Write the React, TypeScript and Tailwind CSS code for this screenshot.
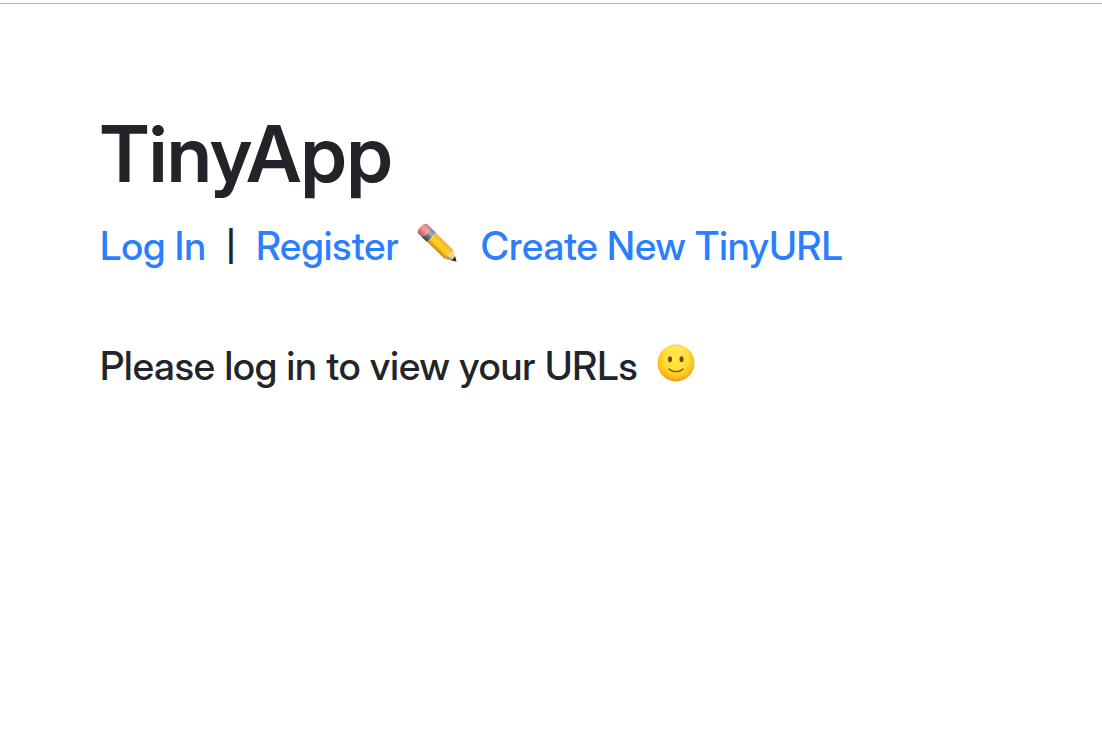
function Pencil() {
  return (
    <svg className="h-10 w-10 shrink-0 overflow-visible" viewBox="0 0 40 40" aria-hidden="true">
      <defs>
        <linearGradient id="barrel" x1="0" y1="0" x2="0" y2="1">
          <stop offset="0" stopColor="#e9c264" />
          <stop offset=".14" stopColor="#f3b829" />
          <stop offset=".3" stopColor="#fbc926" />
          <stop offset=".6" stopColor="#fbd02c" />
          <stop offset=".75" stopColor="#f0b30f" />
          <stop offset="1" stopColor="#bf8810" />
        </linearGradient>
        <linearGradient id="ferrule" x1="0" y1="0" x2="0" y2="1">
          <stop offset="0" stopColor="#6e90b0" />
          <stop offset=".35" stopColor="#a3adb8" />
          <stop offset=".6" stopColor="#76797d" />
          <stop offset="1" stopColor="#3c3e42" />
        </linearGradient>
        <linearGradient id="eraser" x1="0" y1="0" x2="0" y2="1">
          <stop offset="0" stopColor="#dc7679" />
          <stop offset=".4" stopColor="#f3a3a5" />
          <stop offset="1" stopColor="#b85558" />
        </linearGradient>
      </defs>
      <g transform="translate(39.500 38.500) rotate(44)">
        <path d="M-41-6.500h-5.500c-2.300 0-3.500 3-3.500 6.500s1.200 6.500 3.500 6.500h5.500Z" fill="url(#eraser)" />
        <path d="M-42-6.500h7.500v13H-42c1.800-3.500 1.800-9.500 0-13Z" fill="url(#ferrule)" />
        <path d="M-35.500-6.300h25.500v12.600h-25.500c1.800-3.500 1.800-9.100 0-12.600Z" fill="url(#barrel)" />
        <path d="M-10.500-6.300 0 0l-10.500 6.300c.8-1.400.8-2.700 0-4 .8-1.600.8-3 0-4.600.8-1.300.8-2.600 0-4Z" fill="#efd39e" />
        <path d="M-10.500 2.300 0 0l-10.500 6.300c.8-1.400.8-2.700 0-4Z" fill="#c69a65" />
        <path d="M-4.800-2.900 0 0l-4.800 2.900c.7-1.900.7-3.900 0-5.800Z" fill="#252423" />
      </g>
    </svg>
  );
}

function Smiley() {
  return (
    <svg className="h-10 w-10 shrink-0" viewBox="0 0 40 40" aria-hidden="true">
      <defs>
        <radialGradient id="face" cx=".5" cy=".4" r=".62">
          <stop offset="0" stopColor="#ffec48" />
          <stop offset=".5" stopColor="#ffdc35" />
          <stop offset=".8" stopColor="#fdbd1f" />
          <stop offset="1" stopColor="#ee8e0f" />
        </radialGradient>
        <linearGradient id="shine" x1="0" y1="0" x2="0" y2="1">
          <stop offset="0" stopColor="#fff38a" stopOpacity=".6" />
          <stop offset="1" stopColor="#ffe03b" stopOpacity="0" />
        </linearGradient>
      </defs>
      <circle cx="20" cy="20" r="18.500" fill="url(#face)" />
      <ellipse cx="20" cy="9.500" rx="13.500" ry="7" fill="url(#shine)" />
      <ellipse cx="14" cy="16.300" rx="2" ry="3" fill="#754313" />
      <ellipse cx="25.500" cy="16.300" rx="2" ry="3" fill="#754313" />
      <path d="M13 26c3.600 3.600 10.400 3.600 14 0" fill="none" stroke="#83490d" strokeWidth="1.300" strokeLinecap="round" />
    </svg>
  );
}

export default function App() {
  return (
    <div className="min-h-screen bg-white pt-[3px] font-['Inter_Display','Inter',sans-serif] text-[#212529]">
      <main className="border-t border-[#b5b5b5] px-[100px] pt-[102px]">
        <header>
          <h1 className="text-[78px] leading-[96px] font-semibold">TinyApp</h1>
          <nav className="mt-[14px] flex flex-wrap items-center text-[39px] leading-[60px] font-medium text-[#2b7fff]">
            <a href="#login">Log In</a>
            <span className="mx-5 w-[10px] text-center text-[30px] font-semibold text-[#212529]">|</span>
            <a href="#register">Register</a>
            <span className="mr-6 mb-1.5 ml-[18px]"><Pencil /></span>
            <a href="#new">Create New TinyURL</a>
          </nav>
        </header>
        <p className="mt-[60px] flex items-center gap-[18px] text-[39px] leading-[60px] font-medium">
          Please log in to view your URLs
          <span className="mb-1.5"><Smiley /></span>
        </p>
      </main>
    </div>
  );
}
